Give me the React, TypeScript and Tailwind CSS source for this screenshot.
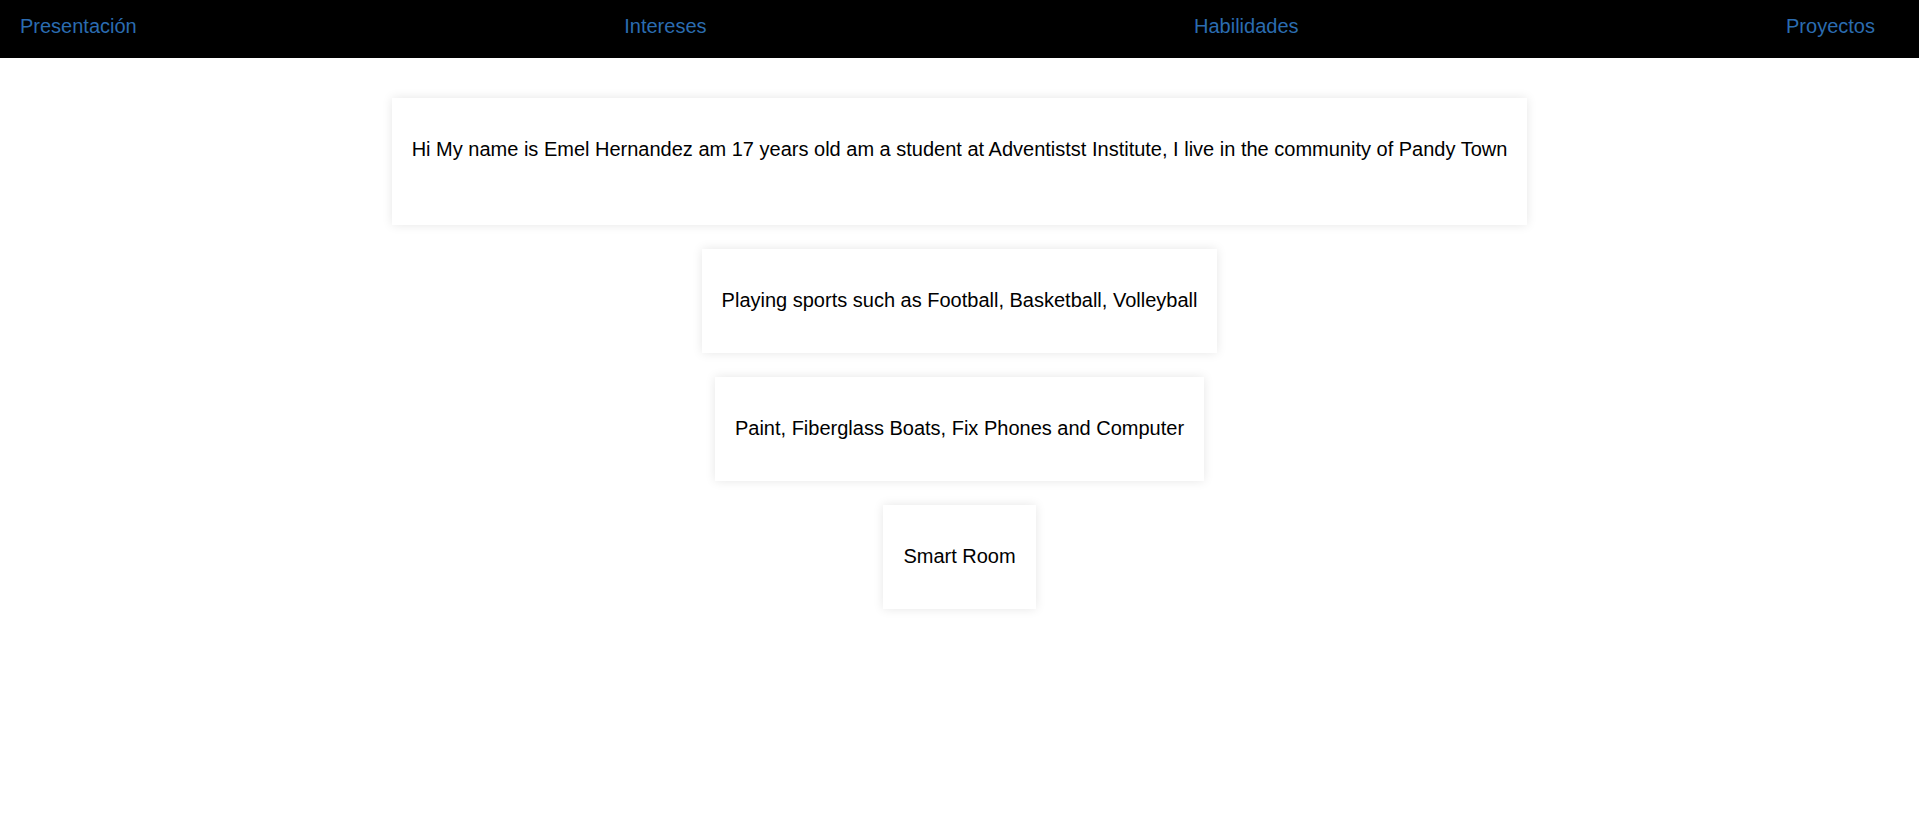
const links = ["Presentación", "Intereses", "Habilidades", "Proyectos"];

const Card = ({ text, first }: { text: string; first?: boolean }) => (
  <div
    className={`bg-white px-5 text-center text-[20px] leading-[23px] text-black shadow-[0_0_10px_rgba(0,0,0,0.1)] ${
      first ? "pt-[40px] pb-[64px]" : "pt-[40px] pb-[41px]"
    }`}
  >
    {text}
  </div>
);

export default function App() {
  return (
    <div className="min-h-[813px] bg-white font-['Liberation_Sans',Arial,sans-serif]">
      <nav className="flex h-[58px] items-start justify-between bg-black pl-5 pr-[44px] pt-[15px]">
        {links.map((l) => (
          <a key={l} href="#" className="text-[20px] leading-[23px] text-[#2b6cb0]">
            {l}
          </a>
        ))}
      </nav>

      <main className="flex flex-col items-center gap-6 pt-[40px]">
        <Card
          first
          text="Hi My name is Emel Hernandez am 17 years old am a student at Adventistst Institute, I live in the community of Pandy Town"
        />
        <Card text="Playing sports such as Football, Basketball, Volleyball" />
        <Card text="Paint, Fiberglass Boats, Fix Phones and Computer" />
        <Card text="Smart Room" />
      </main>
    </div>
  );
}
